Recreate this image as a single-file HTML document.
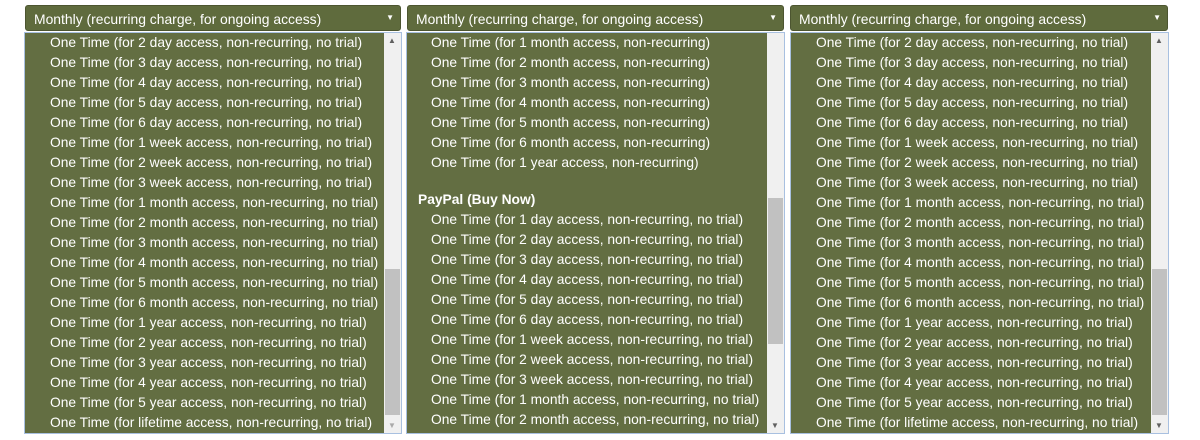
<!DOCTYPE html><html><head><style>
body{margin:0;width:1200px;height:440px;background:#fff;position:relative;font-family:"Liberation Sans",sans-serif;font-size:13px;color:#fff;overflow:hidden}
.sel{position:absolute;top:5px;height:26px;background:#5f6b3d;border:1px solid #4c5530;border-radius:3px;box-sizing:border-box;line-height:27px;padding-left:8px;font-size:13.9px}
.sel:after{content:"▼";position:absolute;right:6px;top:-2px;font-size:8px}
.list{position:absolute;top:32px;height:402px;background:#636e42;border:1px solid #a8c0e0;box-sizing:border-box}
.sb{position:absolute;top:0;right:0;width:17px;height:100%;background:#f0f0f0}
.th{position:absolute;left:1px;width:15px;background:#c1c1c1}
.r{position:absolute;white-space:nowrap;line-height:20px;font-size:13.8px}
.h{font-weight:bold}
.ar{position:absolute;left:4px;font-size:8px;color:#606060}
</style></head><body>
<div class="sel" style="left:25px;width:376px">Monthly (recurring charge, for ongoing access)</div>
<div class="sel" style="left:407px;width:377px">Monthly (recurring charge, for ongoing access)</div>
<div class="sel" style="left:790px;width:378px">Monthly (recurring charge, for ongoing access)</div>
<div class="list" style="left:24px;width:378px" id="l1"><div class="sb"><div class="ar" style="top:3px">▲</div><div class="th" style="top:236px;height:146px"></div><div class="ar" style="bottom:3px;color:#aaa">▼</div></div></div>
<div class="list" style="left:406px;width:379px" id="l2"><div class="sb"><div class="th" style="top:165px;height:146px"></div><div class="ar" style="bottom:3px">▼</div></div></div>
<div class="list" style="left:790px;width:379px" id="l3"><div class="sb"><div class="ar" style="top:3px">▲</div><div class="th" style="top:236px;height:146px"></div><div class="ar" style="bottom:3px">▼</div></div></div>
<script>
var a=["2 day","3 day","4 day","5 day","6 day","1 week","2 week","3 week","1 month","2 month","3 month","4 month","5 month","6 month","1 year","2 year","3 year","4 year","5 year","lifetime"];
function add(id,left,items){var l=document.getElementById(id);items.forEach(function(it){var d=document.createElement('div');d.className='r'+(it[2]?' h':'');d.style.left=it[1]+'px';d.style.top=it[0]+'px';d.textContent=it[3];l.appendChild(d);});}
var i1=a.map(function(s,i){return[0+i*20,25,0,"One Time (for "+s+" access, non-recurring, no trial)"]});
add('l1',0,i1);add('l3',0,i1);
var i2=[];["1 month","2 month","3 month","4 month","5 month","6 month","1 year"].forEach(function(s,i){i2.push([0+i*20,24,0,"One Time (for "+s+" access, non-recurring)"])});
i2.push([157,11,1,"PayPal (Buy Now)"]);
["1 day","2 day","3 day","4 day","5 day","6 day","1 week","2 week","3 week","1 month","2 month"].forEach(function(s,i){i2.push([177+i*20,24,0,"One Time (for "+s+" access, non-recurring, no trial)"])});
add('l2',0,i2);
</script>
</body></html>
